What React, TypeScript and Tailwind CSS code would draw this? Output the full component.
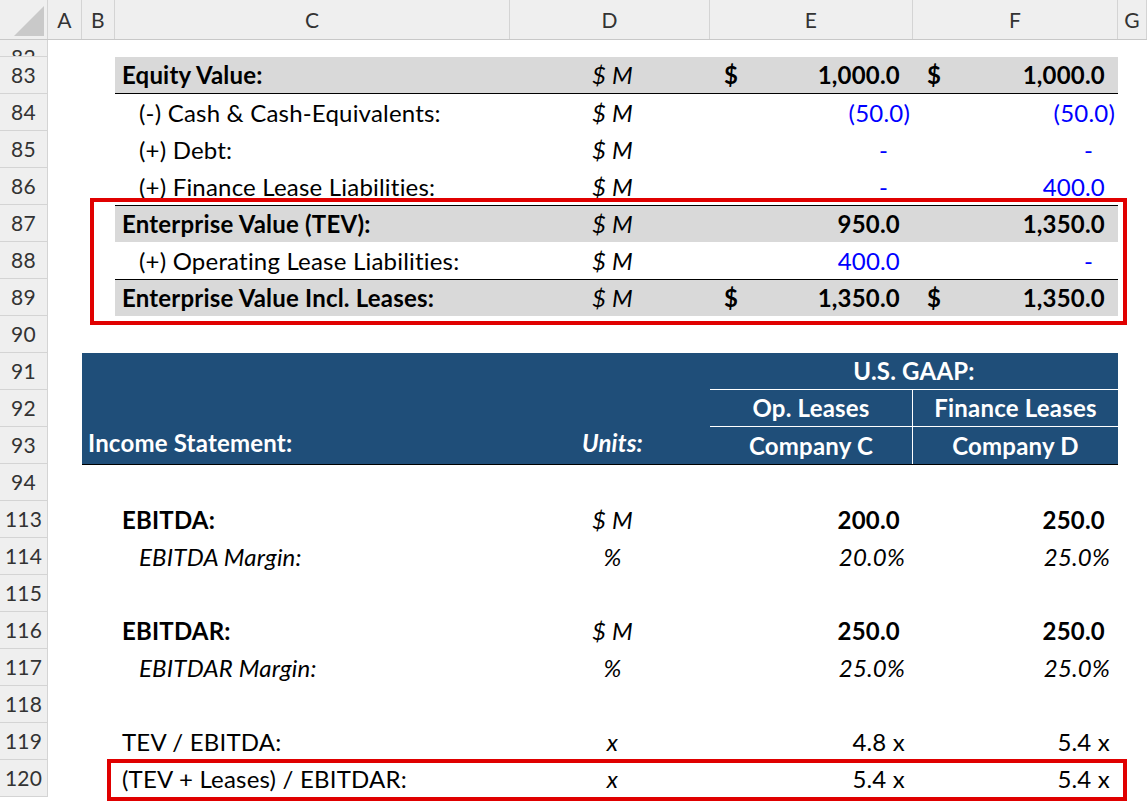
import React from 'react';

const COLS = 'grid-cols-[48px_34px_33px_395px_200px_203px_205px_29px]';

type Cell = React.ReactNode;

function Row({ n, c, d, e, f, band, top, bottom, h = 'h-[37px]' }: { n: string; c?: Cell; d?: Cell; e?: Cell; f?: Cell; band?: boolean; top?: boolean; bottom?: boolean; h?: string }) {
  const bg = band ? 'bg-[#d9d9d9]' : '';
  const bt = top ? 'border-t border-black' : '';
  const bb = bottom ? 'border-b border-black' : '';
  return (
    <div className={`grid ${COLS} ${h}`}>
      <div className="bg-[#efefef] border-r border-b border-[#d4d4d4] text-[#333] flex items-center justify-center text-[21px]">{n}</div>
      <div />
      <div />
      <div className={`${bg} ${bt} ${bb} flex items-center pl-[7px] whitespace-nowrap`}>{c}</div>
      <div className={`${bg} ${bt} ${bb} flex items-center justify-center pl-[5px] italic`}>{d}</div>
      <div className={`${bg} ${bt} ${bb} flex items-center`}>{e}</div>
      <div className={`${bg} ${bt} ${bb} flex items-center`}>{f}</div>
      <div />
    </div>
  );
}

function Acc({ v, dollar, paren, cls = '' }: { v: string; dollar?: boolean; paren?: boolean; cls?: string }) {
  return (
    <div className={`flex w-full items-center pl-[14px] ${paren ? 'pr-[3px]' : 'pr-[13px]'} ${cls}`}>
      <span className="font-bold">{dollar ? '$' : ''}</span>
      <span className="ml-auto">{v}</span>
    </div>
  );
}

function Dash() {
  return <div className="w-full text-right pr-[25px] text-[#0000ff]">-</div>;
}

function R({ v, cls = '' }: { v: string; cls?: string }) {
  return <div className={`w-full text-right pr-[8px] ${cls}`}>{v}</div>;
}

export default function App() {
  return (
    <div className="relative w-[1147px] h-[803px] overflow-hidden bg-white text-[24px] tracking-[0.2px] text-black" style={{ fontFamily: 'Lato, "Liberation Sans", sans-serif' }}>
      <div className={`grid ${COLS} h-[40px] bg-[#efefef] text-[#333] text-[21px] border-b border-[#c8c8c8]`}>
        <div className="relative border-r border-[#d4d4d4]">
          <div className="absolute right-[3px] bottom-[3px] w-0 h-0 border-l-[30px] border-l-transparent border-b-[30px] border-b-[#c9c9c9]" />
        </div>
        {['A', 'B', 'C', 'D', 'E', 'F', 'G'].map((l) => (
          <div key={l} className="border-r border-[#d4d4d4] flex items-center justify-center">{l}</div>
        ))}
      </div>
      <div className={`grid ${COLS} h-[17px] overflow-hidden`}>
        <div className="bg-[#efefef] border-r border-b border-[#d4d4d4] text-[#333] flex items-end justify-center leading-[16px] text-[21px] overflow-hidden"><span className="-mb-[9px]">82</span></div>
      </div>
      <Row n="83" band bottom c={<b>Equity Value:</b>} d="$ M" e={<Acc v="1,000.0" dollar cls="font-bold" />} f={<Acc v="1,000.0" dollar cls="font-bold" />} />
      <Row n="84" c={<span className="pl-[17px]">(-) Cash &amp; Cash-Equivalents:</span>} d="$ M" e={<Acc v="(50.0)" paren cls="text-[#0000ff]" />} f={<Acc v="(50.0)" paren cls="text-[#0000ff]" />} />
      <Row n="85" c={<span className="pl-[17px]">(+) Debt:</span>} d="$ M" e={<Dash />} f={<Dash />} />
      <Row n="86" c={<span className="pl-[17px]">(+) Finance Lease Liabilities:</span>} d="$ M" e={<Dash />} f={<Acc v="400.0" cls="text-[#0000ff]" />} />
      <Row n="87" band top c={<b>Enterprise Value (TEV):</b>} d="$ M" e={<Acc v="950.0" cls="font-bold" />} f={<Acc v="1,350.0" cls="font-bold" />} />
      <Row n="88" c={<span className="pl-[17px]">(+) Operating Lease Liabilities:</span>} d="$ M" e={<Acc v="400.0" cls="text-[#0000ff]" />} f={<Dash />} />
      <Row n="89" band top c={<b>Enterprise Value Incl. Leases:</b>} d="$ M" e={<Acc v="1,350.0" dollar cls="font-bold" />} f={<Acc v="1,350.0" dollar cls="font-bold" />} />
      <Row n="90" />
      <div className={`grid ${COLS} h-[111px]`}>
        <div className="flex flex-col">
          {['91', '92', '93'].map((n) => (
            <div key={n} className="h-[37px] bg-[#efefef] border-r border-b border-[#d4d4d4] text-[#333] flex items-center justify-center text-[21px]">{n}</div>
          ))}
        </div>
        <div />
        <div className="col-span-5 bg-[#1f4e79] text-white font-bold border-b border-black grid grid-cols-[428px_200px_203px_205px] grid-rows-3">
          <div className="row-span-3 flex items-end pb-[3px] pl-[6px]">Income Statement:</div>
          <div className="row-span-3 flex items-end justify-center pb-[3px] pl-[5px] italic">Units:</div>
          <div className="col-span-2 flex items-center justify-center border-b border-white">U.S. GAAP:</div>
          <div className="flex items-center justify-center border-b border-r border-white">Op. Leases</div>
          <div className="flex items-center justify-center border-b border-white">Finance Leases</div>
          <div className="flex items-center justify-center border-r border-white">Company C</div>
          <div className="flex items-center justify-center">Company D</div>
        </div>
      </div>
      <Row n="94" />
      <Row n="113" c={<b>EBITDA:</b>} d="$ M" e={<Acc v="200.0" cls="font-bold" />} f={<Acc v="250.0" cls="font-bold" />} />
      <Row n="114" c={<i className="pl-[17px]">EBITDA Margin:</i>} d="%" e={<R v="20.0%" cls="italic" />} f={<R v="25.0%" cls="italic" />} />
      <Row n="115" />
      <Row n="116" c={<b>EBITDAR:</b>} d="$ M" e={<Acc v="250.0" cls="font-bold" />} f={<Acc v="250.0" cls="font-bold" />} />
      <Row n="117" c={<i className="pl-[17px]">EBITDAR Margin:</i>} d="%" e={<R v="25.0%" cls="italic" />} f={<R v="25.0%" cls="italic" />} />
      <Row n="118" />
      <Row n="119" c="TEV / EBITDA:" d="x" e={<R v="4.8 x" cls="pr-[3px]" />} f={<R v="5.4 x" cls="pr-[3px]" />} />
      <Row n="120" c="(TEV + Leases) / EBITDAR:" d="x" e={<R v="5.4 x" cls="pr-[3px]" />} f={<R v="5.4 x" cls="pr-[3px]" />} />
      <div className="absolute left-[90px] top-[198px] w-[1037px] h-[127px] border-[4px] border-[#e00000]" />
      <div className="absolute left-[107px] top-[759px] w-[1020px] h-[42px] border-[4px] border-[#e00000]" />
    </div>
  );
}
